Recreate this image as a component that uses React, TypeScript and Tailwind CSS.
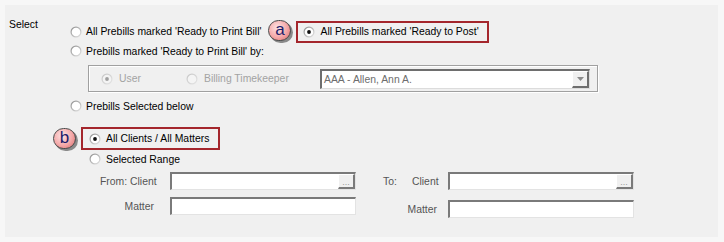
import React from 'react';

function Radio({ checked = false, disabled = false }: { checked?: boolean; disabled?: boolean }) {
  const rim = disabled ? '#c4c4c4' : '#8a8a8a';
  const id = disabled ? 'rd' : 'rn';
  return (
    <svg width="12" height="12" viewBox="0 0 12 12" className="shrink-0">
      <defs>
        <linearGradient id={id} x1="0" y1="0" x2="1" y2="1">
          <stop offset="0" stopColor={rim} />
          <stop offset="1" stopColor="#e6e6e6" />
        </linearGradient>
      </defs>
      <circle cx="6" cy="6" r="5.5" fill={`url(#${id})`} />
      <circle cx="6" cy="6" r="4.3" fill={disabled ? '#f4f4f4' : '#ffffff'} />
      {checked && <circle cx="6" cy="6" r="1.9" fill={disabled ? '#a0a0a0' : '#111111'} />}
    </svg>
  );
}

function Badge({ letter }: { letter: string }) {
  return (
    <div className="relative w-[25px] h-[23px] shrink-0">
      <div className="absolute left-[2px] top-[2px] w-[23px] h-[21px] rounded-full bg-[#8a8a8a]" />
      <div className="absolute left-0 top-0 w-[23px] h-[21px] rounded-full border border-[#4a4a4a] bg-[radial-gradient(circle_at_40%_35%,#fde4e4_0%,#f4a8a8_55%,#d96a6a_100%)] flex items-center justify-center">
        <span className="text-[17px] leading-none text-[#1c1c6b] -mt-[3px]">{letter}</span>
      </div>
    </div>
  );
}

function Field({ browse = false, width }: { browse?: boolean; width: string }) {
  return (
    <div className={`${width} h-[18px] bg-white border-t-2 border-l-2 border-t-[#7a7a7a] border-l-[#7a7a7a] border-b border-r border-b-[#e3e3e3] border-r-[#e3e3e3] flex justify-end`}>
      {browse && (
        <div className="w-[17px] h-[15px] bg-[#f0f0f0] border-r-2 border-b-2 border-r-[#7a7a7a] border-b-[#7a7a7a] border-t border-l border-t-white border-l-white flex items-end justify-center text-[9px] leading-[10px] text-[#9a9a9a]">
          ...
        </div>
      )}
    </div>
  );
}

export default function App() {
  return (
    <div
      className="w-[724px] h-[242px] bg-[#f7f7f7] p-[5px] text-[10.4px] leading-[13px] text-black whitespace-nowrap"
      style={{ fontFamily: '"Liberation Sans", Arial, sans-serif' }}
    >
      <div className="w-[713px] h-[232px] bg-[#f0f0f0] flex">
        <div className="w-[65px] pl-[4px] pt-[13px]">Select</div>
        <div className="flex flex-col pt-[15px]">
          {/* ready to print / ready to post */}
          <div className="flex items-center h-[23px]">
            <Radio />
            <span className="ml-[4px]">All Prebills marked 'Ready to Print Bill'</span>
            <div className="ml-[7px]">
              <Badge letter="a" />
            </div>
            <div className="ml-[3px] h-[22px] border-2 border-[#a4262c] flex items-center pl-[5px] pr-[8px]">
              <Radio checked />
              <span className="ml-[5px]">All Prebills marked 'Ready to Post'</span>
            </div>
          </div>
          <div className="flex items-center h-[16px]">
            <Radio />
            <span className="ml-[4px]">Prebills marked 'Ready to Print Bill' by:</span>
          </div>
          {/* group box */}
          <div className="ml-[18px] mt-[6px] w-[510px] h-[27px] border border-[#a0a0a0] shadow-[inset_1px_1px_0_#ffffff,1px_1px_0_#ffffff] flex items-center pl-[12px] pr-[7px]">
            <Radio checked disabled />
            <span className="ml-[6px] text-[#a3a3a3]">User</span>
            <div className="ml-[45px] flex items-center">
              <Radio disabled />
              <span className="ml-[6px] text-[#a3a3a3]">Billing Timekeeper</span>
            </div>
            <div className="ml-auto w-[270px] h-[20px] bg-white border-t-2 border-l-2 border-t-[#6e6e6e] border-l-[#6e6e6e] border-b border-r border-b-[#dcdcdc] border-r-[#dcdcdc] flex items-center">
              <span className="ml-[2px] text-[#6d6d6d]">AAA - Allen, Ann A.</span>
              <div className="ml-auto w-[17px] h-[17px] bg-[#f0f0f0] border-r-2 border-b-2 border-r-[#6e6e6e] border-b-[#6e6e6e] border-t border-l border-t-white border-l-white flex items-center justify-center">
                <svg width="7" height="4" viewBox="0 0 7 4">
                  <path d="M0 0H7L3.5 4Z" fill="#8a8a8a" />
                </svg>
              </div>
            </div>
          </div>
          <div className="flex items-center h-[16px] mt-[6px]">
            <Radio />
            <span className="ml-[4px]">Prebills Selected below</span>
          </div>
          {/* all clients */}
          <div className="mt-[13px] ml-[11px] flex">
            <div className="relative h-[23px] border-2 border-[#a4262c] flex items-center pl-[6px] pr-[9px]">
              <div className="absolute left-[-30px] top-[-1px]">
                <Badge letter="b" />
              </div>
              <Radio checked />
              <span className="ml-[5px]">All Clients / All Matters</span>
            </div>
          </div>
          <div className="flex items-center h-[16px] mt-[1px] ml-[19px]">
            <Radio />
            <span className="ml-[5px]">Selected Range</span>
          </div>
          {/* range fields */}
          <div className="flex mt-[5px] ml-[30px] text-[#555555]">
            <div className="flex flex-col gap-[7px]">
              <div className="flex items-center">
                <span className="w-[54px] text-right">From: Client</span>
                <div className="ml-[16px]">
                  <Field browse width="w-[186px]" />
                </div>
              </div>
              <div className="flex items-center">
                <span className="w-[54px] text-right">Matter</span>
                <div className="ml-[16px]">
                  <Field width="w-[186px]" />
                </div>
              </div>
            </div>
            <div className="flex flex-col gap-[10px] ml-[27px]">
              <div className="flex items-center">
                <span className="w-[29px]">To:</span>
                <span className="w-[25px] text-right">Client</span>
                <div className="ml-[11px]">
                  <Field browse width="w-[186px]" />
                </div>
              </div>
              <div className="flex items-center">
                <span className="w-[54px] text-right">Matter</span>
                <div className="ml-[11px]">
                  <Field width="w-[186px]" />
                </div>
              </div>
            </div>
          </div>
        </div>
      </div>
    </div>
  );
}
